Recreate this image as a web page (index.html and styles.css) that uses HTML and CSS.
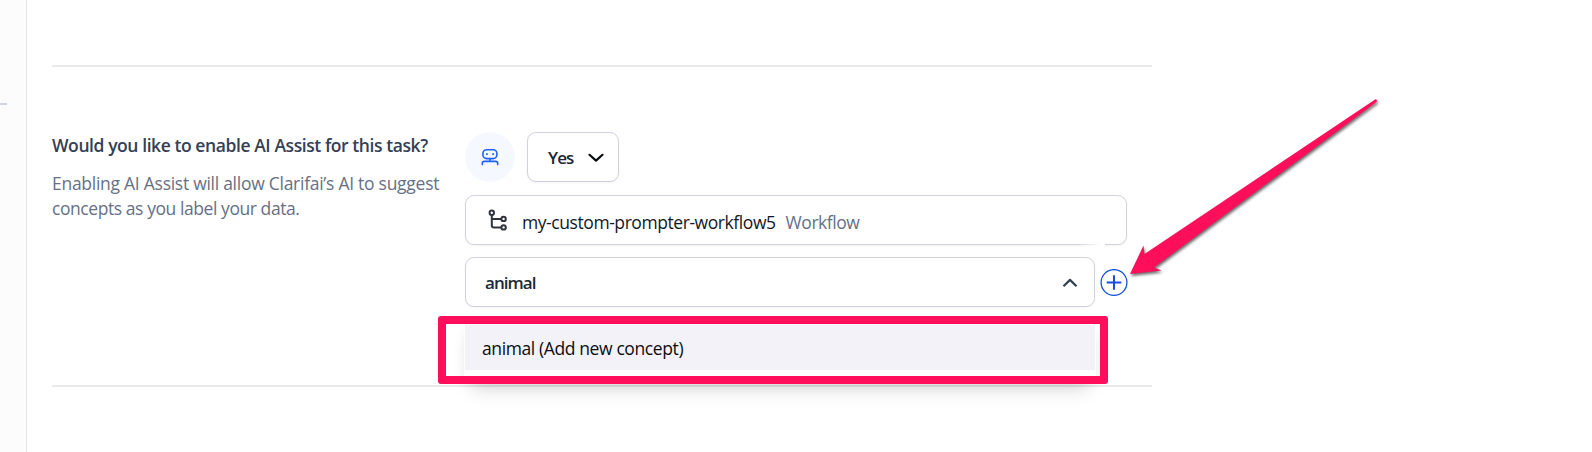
FILE: index.html
```html
<!DOCTYPE html>
<html lang="en">
<head>
<meta charset="utf-8">
<title>AI Assist</title>
<link rel="stylesheet" href="styles.css">
</head>
<body>
<div class="page">
  <aside class="rail"><span class="rail-mark"></span></aside>
  <main class="content">
    <section class="previous"></section>
    <section class="setting">
      <div class="description">
        <h2 class="title"><span class="t-title">Would you like to enable AI Assist for this task?</span></h2>
        <p class="help"><span class="t-help1">Enabling AI Assist will allow Clarifai’s AI to suggest</span><br><span class="t-help2">concepts as you label your data.</span></p>
      </div>
      <div class="controls">
        <div class="row toggle-row">
          <span class="avatar">
            <svg width="18" height="18" viewBox="0 0 18 18" fill="none" stroke="#1f62f5" stroke-width="1.6" stroke-linecap="round"><rect x="1.900" y="1.800" width="14" height="8.800" rx="3.800"/><path d="M9 10.800v2.400M1.300 16.600v-1.200q0-2 2-2h11.400q2 0 2 2v1.200"/><path d="M5.100 6.100h1.700M11.200 6.100h1.700" stroke-width="1.900" stroke-linecap="butt"/></svg>
          </span>
          <button class="box choice"><span class="t-yes">Yes</span>
            <svg class="chev" width="16" height="10" viewBox="0 0 16 10" fill="none" stroke="#0b0d12" stroke-width="2.200" stroke-linecap="round" stroke-linejoin="round"><path d="M1.500 1.800 8 7.600 14.500 1.800"/></svg>
          </button>
        </div>
        <div class="box workflow">
          <svg class="tree" width="20" height="22" viewBox="0 0 20 22" fill="none" stroke="#30343b" stroke-width="2"><circle cx="3.800" cy="3.800" r="2.200"/><circle cx="15.600" cy="9.900" r="2.200"/><circle cx="15.600" cy="18.400" r="2.200"/><path d="M3.800 6v10.200q0 2.200 2.200 2.200h7.300M3.800 9.900h9.500"/></svg>
          <span class="t-name">my-custom-prompter-workflow5</span><span class="t-kind">Workflow</span>
        </div>
        <div class="row concept-row">
          <div class="box concept"><span class="t-value">animal</span>
            <svg width="16" height="10" viewBox="0 0 16 10" fill="none" stroke="#344054" stroke-width="2.200" stroke-linejoin="round"><path d="M1.500 8.300 8 1.900l6.500 6.400"/></svg>
          </div>
          <button class="add" aria-label="Add concept"><svg width="28" height="28" viewBox="0 0 28 28" fill="none" stroke="#1550d8"><circle cx="14" cy="13.500" r="12.900" stroke-width="1.300"/><path d="M14 6.200v14.600M6.700 13.500h14.600" stroke-width="2"/></svg></button>
          <div class="menu"><div class="option"><span class="t-option">animal (Add new concept)</span></div></div>
        </div>
      </div>
    </section>
  </main>
  <div class="highlight"></div>
  <svg class="arrow" width="270" height="200" viewBox="1120 90 270 200"><path d="M1130 274 1143.500 245.500 1144.500 254 1375.500 99.200Q1377.800 99.500 1376.500 102L1154 267.500 1161.500 270.500Z" fill="#ff0f5b"/></svg>
</div>
</body>
</html>
```

FILE: styles.css
```css
* { box-sizing: border-box; }
body { margin: 0; background: #fff; font-family: "Open Sans", "Noto Sans", sans-serif; font-size: 17.5px; line-height: 25px; color: #101828; }
.page { position: relative; display: flex; width: 1592px; height: 452px; overflow: hidden; }
.rail { width: 27px; padding-top: 103px; background: #fcfcfd; border-right: 1px solid #e4e4e7; }
.rail-mark { display: block; width: 7px; height: 2px; background: #cfd2e0; }
.content { width: 1125px; padding-left: 25px; }
.previous { height: 67px; border-bottom: 2px solid #e9e9e9; }
.setting { display: flex; height: 320px; padding-top: 65px; border-bottom: 2px solid #e9e9e9; }
.description { width: 413px; }
.title { margin: 1px 0 13px; font-size: 17.5px; font-weight: 600; color: #344054; }
.help { margin: 0; color: #667085; }
.description span, .controls span { white-space: nowrap; }
.controls { display: flex; flex-direction: column; width: 662px; gap: 12px; }
.row { display: flex; position: relative; }
.toggle-row { gap: 12px; height: 51px; }
.avatar { display: flex; align-items: center; justify-content: center; width: 50px; height: 50px; padding-right: 1px; border-radius: 50%; background: #f5f9ff; }
.box { display: flex; align-items: center; height: 50px; border: 1px solid #d0d3df; border-radius: 9px; background: #fff; box-shadow: 0 1px 2px #1018280d; }
.choice { width: 92px; padding: 1px 14px 0 20px; justify-content: space-between; font: inherit; font-weight: 600; color: #1d2433; }
.workflow { position: relative; padding-left: 22px; }
.workflow::after { content: ""; position: absolute; right: 21px; bottom: -3px; width: 26px; height: 4px; background: linear-gradient(90deg, #fff0, #fff 80%); }
.tree { margin: -1px 14px 0 0; }
.workflow span { padding-top: 5px; }
.t-kind { margin-left: 10px; color: #667085; }
.concept-row { gap: 5px; align-items: center; }
.concept { flex: none; width: 630px; padding: 1px 16px 0 20px; justify-content: space-between; }
.add { display: flex; flex: none; padding: 1px 0 0; border: 0; background: none; }
.menu { position: absolute; top: 61px; left: -1px; width: 632px; height: 66px; padding: 7px 1px 0; background: #fff; border-radius: 8px; box-shadow: 0 12px 20px -8px #00000028, 0 4px 14px -4px #00000010; }
.option { height: 45px; padding: 11px 17px; background: #f3f2f8; color: #0b0d12; }
.highlight { position: absolute; left: 438px; top: 316px; width: 670px; height: 68px; border: 8px solid #ff0f5b; border-radius: 3px; }
.arrow { position: absolute; left: 1120px; top: 90px; filter: drop-shadow(1px 2px 1.5px #0009); }
.t-title { letter-spacing: -0.42px; }
.t-help1 { letter-spacing: -0.27px; }
.t-help2 { letter-spacing: -0.43px; }
.t-name { letter-spacing: -0.43px; }
.t-kind { letter-spacing: -0.45px; }
.t-option { letter-spacing: -0.39px; }
.t-yes { font-size: 17px; letter-spacing: -0.9px; }
.t-value { margin-left: -1px; font-size: 17px; font-weight: 600; letter-spacing: -0.95px; color: #1d2939; }
```
